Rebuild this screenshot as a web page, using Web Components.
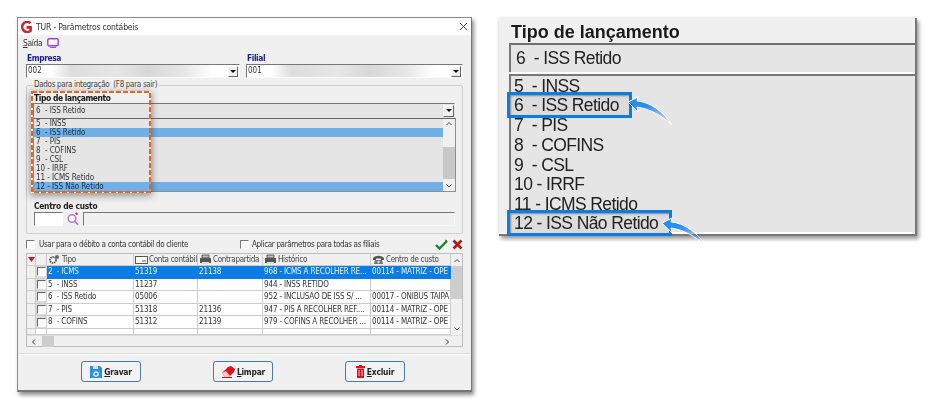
<!DOCTYPE html>
<html lang="pt">
<head>
<meta charset="utf-8">
<title>TUR - Parâmetros contábeis</title>
<style>
  html, body { margin: 0; background: #fff; }
  body {
    width: 935px; height: 411px; overflow: hidden; box-sizing: border-box;
    padding: 17px 0 0 17px;
    display: flex; align-items: flex-start; gap: 27px;
    font-family: "DejaVu Sans Condensed", "DejaVu Sans", "Liberation Sans", sans-serif;
    color: #222;
  }
  svg { display: block; }
</style>
</head>
<body>

<tur-window caption="TUR - Parâmetros contábeis">
  <menu-bar></menu-bar>
  <div style="display:grid;grid-template-columns:214px 217px;gap:6px;padding:0 8px">
    <combo-field label="Empresa" value="002" hidden-data></combo-field>
    <combo-field label="Filial" value="001" hidden-data></combo-field>
  </div>
  <group-box legend="Dados para integração  (F8 para sair)">
    <type-picker></type-picker>
    <cost-center></cost-center>
  </group-box>
  <options-row></options-row>
  <data-grid></data-grid>
  <button-bar>
    <action-button>
      <svg slot="icon" width="12" height="13" viewBox="0 0 12 13"><path d="M0 1h10l2 2v10H0z" fill="#2e8fea"/><path d="M3 1h5v3H3z" fill="#cfe6fb"/><circle cx="6" cy="9" r="2.2" fill="none" stroke="#fff" stroke-width="1.2"/></svg>
      <u>G</u>ravar
    </action-button>
    <action-button>
      <svg slot="icon" width="14" height="13" viewBox="0 0 14 13"><path d="M1 8l6-6 3-1 4 3-1 3-5 5H4z" fill="#e0101c"/><path d="M1 8l3 4h4l1-1-4-5z" fill="#f7c9c9"/><path d="M1 12.5h10" stroke="#c01018"/></svg>
      <u>L</u>impar
    </action-button>
    <action-button>
      <svg slot="icon" width="9" height="13" viewBox="0 0 9 13"><path d="M3 0h3v1h3v2H0V1h3z" fill="#e0101c"/><path d="M1 3.5h7V13H1z" fill="#e0101c"/><path d="M3 5v6M6 5v6" stroke="#fbb" stroke-width="1"/></svg>
      <u>E</u>xcluir
    </action-button>
  </button-bar>
</tur-window>

<zoom-panel heading="Tipo de lançamento" selected="6  - ISS Retido">
  <zoom-row>5  - INSS</zoom-row>
  <zoom-row marked="115">6  - ISS Retido</zoom-row>
  <zoom-row>7  - PIS</zoom-row>
  <zoom-row>8  - COFINS</zoom-row>
  <zoom-row>9  - CSL</zoom-row>
  <zoom-row>10 - IRRF</zoom-row>
  <zoom-row>11 - ICMS Retido</zoom-row>
  <zoom-row marked="155">12 - ISS Não Retido</zoom-row>
</zoom-panel>

<script>
// janela principal
class TurWindow extends HTMLElement {
  constructor() {
    super();
    this.attachShadow({ mode: "open" }).innerHTML = `
    <style>
      :host { display: block; width: 455px; height: 375px; flex: none; box-sizing: border-box;
        background: #f0f0f0; border: 1px solid #8a8a8a; border-right-color: #777; border-bottom: 2px solid #777;
        box-shadow: 2px 3px 4px rgba(0,0,0,.45); filter: blur(.25px); font-size: 8px; letter-spacing: -.32px; }
      .title { height: 17px; background: #fff; display: flex; align-items: center; padding: 0 3px 0 2px; gap: 3px; font-size: 8.6px; letter-spacing: -.2px; color: #333; }
      .title span { flex: 1; }
    </style>
    <div class="title">
      <svg width="13" height="12" viewBox="0 0 13 12"><path d="M10.5 2.2A5 5 0 1 0 10.6 9.6V6.4H6.5" fill="none" stroke="#d3202a" stroke-width="2.6"/></svg>
      <span>${this.getAttribute("caption")}</span>
      <svg width="9" height="9" viewBox="0 0 9 9"><path d="M1 1l7 7M8 1L1 8" stroke="#444" stroke-width="1"/></svg>
    </div>
    <slot></slot>`;
  }
}
customElements.define("tur-window", TurWindow);

class MenuBar extends HTMLElement {
  constructor() {
    super();
    this.attachShadow({ mode: "open" }).innerHTML = `
    <style>
      :host { display: flex; height: 18px; align-items: center; gap: 5px; padding: 0 0 3px 5px; box-sizing: border-box; color: #333; font-size: 8.4px; }
    </style>
    <span><u>S</u>aída</span>
    <svg width="12" height="10" viewBox="0 0 12 10"><rect x=".8" y=".8" width="10.4" height="7" rx="1.2" fill="#fff" stroke="#9a3fe0" stroke-width="1.4"/><path d="M3 9.4h6" stroke="#9a3fe0"/></svg>`;
  }
}
customElements.define("menu-bar", MenuBar);

class ComboField extends HTMLElement {
  constructor() {
    super();
    const mask = this.hasAttribute("hidden-data")
      ? "background:linear-gradient(90deg,#fff 12%,#ddd 22%,#e6e6e6 45%,#d8d8d8 60%,#e6e6e6 78%,#fff 92%);" : "";
    this.attachShadow({ mode: "open" }).innerHTML = `
    <style>
      :host { display: block; }
      label { display: block; height: 11px; line-height: 11px; padding-left: 1px; font-weight: bold; color: #1c1c8c; font-size: 8.4px; letter-spacing: -.4px; }
      .box { height: 14px; box-sizing: border-box; display: flex; align-items: center; border: 1px solid #fbfbfb; border-top-color: #777; border-left-color: #777; background: #fff; color: #333; }
      .val { flex: 1; height: 100%; line-height: 12px; padding-left: 1px; letter-spacing: 0; ${mask} }
      .arrow { width: 10px; height: 11px; margin-right: 1px; box-sizing: border-box; background: #f0f0f0; border: 1px solid #fff; border-right-color: #666; border-bottom-color: #666; display: flex; align-items: center; justify-content: center; }
      .arrow i { border: 3px solid transparent; border-top: 3px solid #111; border-bottom: 0; }
    </style>
    <label>${this.getAttribute("label")}</label>
    <div class="box"><div class="val">${this.getAttribute("value")}</div><div class="arrow"><i></i></div></div>`;
  }
}
customElements.define("combo-field", ComboField);

class GroupBox extends HTMLElement {
  constructor() {
    super();
    this.attachShadow({ mode: "open" }).innerHTML = `
    <style>
      :host { display: block; position: relative; box-sizing: border-box; margin: 7px 8px 0; height: 149px; border: 1px solid #cfcfcf; border-radius: 2px; padding: 7px 7px 0 6px; }
      .legend { position: absolute; left: 6px; top: -6px; padding: 0 1px; background: #f0f0f0; white-space: pre; color: #444; }
    </style>
    <div class="legend">${this.getAttribute("legend")}</div>
    <slot></slot>`;
  }
}
customElements.define("group-box", GroupBox);

// combo aberto com a lista de tipos
class TypePicker extends HTMLElement {
  constructor() {
    super();
    const rows = [["5  - INSS"], ["6  - ISS Retido", 1], ["7  - PIS"], ["8  - COFINS"], ["9  - CSL"], ["10 - IRRF"], ["11 - ICMS Retido"], ["12 - ISS Não Retido", 1]];
    this.attachShadow({ mode: "open" }).innerHTML = `
    <style>
      :host { display: block; position: relative; color: #333; letter-spacing: -.08px; }
      .cap { height: 10px; line-height: 10px; font-weight: bold; color: #111; padding-left: 1px; font-size: 8.4px; letter-spacing: -.4px; }
      .sel { height: 15px; box-sizing: border-box; display: flex; align-items: center; width: 422px; background: #e4e4e4; border: 1px solid #e4e4e4; border-top-color: #777; border-left-color: #777; padding-left: 2px; }
      .sel span { flex: 1; white-space: pre; }
      .arrow { width: 11px; height: 12px; box-sizing: border-box; background: #f0f0f0; border: 1px solid #fff; border-right-color: #666; border-bottom-color: #666; display: flex; align-items: center; justify-content: center; }
      .arrow i { border: 3px solid transparent; border-top: 3px solid #111; border-bottom: 0; }
      .list { width: 423px; height: 74px; box-sizing: border-box; border: 1px solid #8d8d8d; border-top-color: #666; background: #e5e5e5; display: flex; }
      .rows { flex: 1; }
      .row { height: 9.05px; line-height: 9px; padding-left: 2px; white-space: pre; }
      .row.on { background: #70b0e6; color: #1a2a3a; }
      .bar { width: 12px; background: #f0f0f0; display: flex; flex-direction: column; align-items: center; }
      .thumb { height: 32px; width: 12px; margin-top: auto; margin-bottom: 3px; background: #c8c8c8; }
      .frame { position: absolute; left: -2px; top: -2px; width: 120px; height: 102px; box-shadow: 0 2px 7px 1px rgba(0,0,0,.38); }
      .frame svg { position: absolute; inset: 0; }
    </style>
    <div class="cap">Tipo de lançamento</div>
    <div class="sel"><span>6  - ISS Retido</span><div class="arrow"><i></i></div></div>
    <div class="list">
      <div class="rows">${rows.map(r => `<div class="row${r[1] ? " on" : ""}">${r[0]}</div>`).join("")}</div>
      <div class="bar">
        <svg width="8" height="10" viewBox="0 0 8 10"><path d="M1.5 6L4 3.5 6.5 6" fill="none" stroke="#444"/></svg>
        <div class="thumb"></div>
        <svg style="margin-bottom:1px" width="8" height="8" viewBox="0 0 8 8"><path d="M1.5 2.5L4 5l2.5-2.5" fill="none" stroke="#444"/></svg>
      </div>
    </div>
    <div class="frame"><svg width="120" height="102"><rect x="1" y="1" width="118" height="100" fill="none" stroke="#e8651c" stroke-width="2" stroke-dasharray="5 2"/></svg></div>`;
  }
}
customElements.define("type-picker", TypePicker);

class CostCenter extends HTMLElement {
  constructor() {
    super();
    this.attachShadow({ mode: "open" }).innerHTML = `
    <style>
      :host { display: block; margin-top: 8px; }
      .cap { height: 12px; line-height: 12px; font-weight: bold; color: #222; padding-left: 1px; font-size: 8.4px; letter-spacing: -.27px; }
      .line { display: flex; height: 14px; align-items: stretch; }
      .code { width: 29px; box-sizing: border-box; margin-left: 1px; background: #fff; border: 1px solid #fff; border-top-color: #777; border-left-color: #777; }
      svg { margin: 0 4px 0 4px; }
      .desc { width: 372px; box-sizing: border-box; border: 1px solid #f7f7f7; border-top-color: #777; border-left-color: #777; }
    </style>
    <div class="cap">Centro de custo</div>
    <div class="line">
      <div class="code"></div>
      <svg width="12" height="14" viewBox="0 0 12 14"><circle cx="5" cy="6.5" r="3.8" fill="#fff" stroke="#b06ee6" stroke-width="1.4"/><path d="M8 9.5l3 3.2" stroke="#b06ee6" stroke-width="1.6"/><path d="M8.5 1l2 1.5" stroke="#e0202a" stroke-width="1.6"/></svg>
      <div class="desc"></div>
    </div>`;
  }
}
customElements.define("cost-center", CostCenter);

class OptionsRow extends HTMLElement {
  constructor() {
    super();
    this.attachShadow({ mode: "open" }).innerHTML = `
    <style>
      :host { display: flex; align-items: center; height: 12px; margin: 4px 8px 0; color: #333; letter-spacing: -.34px; }
      label { display: flex; align-items: center; gap: 4px; }
      i { display: block; width: 9px; height: 9px; box-sizing: border-box; background: #fff; border: 1px solid #fff; border-top-color: #777; border-left-color: #777; }
      .a { width: 214px; }
      .b { flex: 1; gap: 3px; }
      .ok { margin-right: 4px; }
    </style>
    <label class="a"><i></i>Usar para o débito a conta contábil do cliente</label>
    <label class="b"><i></i>Aplicar parâmetros para todas as filiais</label>
    <svg class="ok" width="13" height="11" viewBox="0 0 13 11"><path d="M1 6l3.5 3.5L12 2" fill="none" stroke="#0f8a20" stroke-width="2.4"/><path d="M10 1l2 1" stroke="#d02020"/></svg>
    <svg width="11" height="11" viewBox="0 0 11 11"><path d="M1.5 1.5l8 8M9.5 1.5l-8 8" stroke="#b01818" stroke-width="2.6"/></svg>`;
  }
}
customElements.define("options-row", OptionsRow);

// grade com os parametros ja gravados
class DataGrid extends HTMLElement {
  constructor() {
    super();
    const gears = `<svg width="13" height="11" viewBox="0 0 13 11"><circle cx="5" cy="6" r="3" fill="none" stroke="#444" stroke-width="1.6" stroke-dasharray="1.4 .8"/><circle cx="9" cy="3" r="2" fill="#666"/></svg>`;
    const card = `<svg width="13" height="10" viewBox="0 0 13 10"><rect x=".5" y="1.5" width="12" height="7" fill="#fff" stroke="#555"/><path d="M7 6h4" stroke="#c33"/></svg>`;
    const printer = `<svg width="13" height="11" viewBox="0 0 13 11"><path d="M3 1h7v3H3z" fill="#bbb" stroke="#444" stroke-width=".8"/><path d="M1 4h11v5H1z" fill="#555"/><path d="M3 8h7v2H3z" fill="#ddd"/></svg>`;
    const phone = `<svg width="13" height="10" viewBox="0 0 13 10"><path d="M1 3c3-3 8-3 11 0v2H9V3.5H4V5H1z" fill="#555"/><path d="M3 5h7l1 4H2z" fill="#777"/><circle cx="6.5" cy="7" r="1.2" fill="#ddd"/></svg>`;
    const data = [
      ["2  - ICMS", "51319", "21138", "968 - ICMS A RECOLHER RE...", "00114 - MATRIZ - OPE", 1],
      ["5  - INSS", "11237", "", "944 - INSS RETIDO", ""],
      ["6  - ISS Retido", "05006", "", "952 - INCLUSAO DE ISS S/ ...", "00017 - ONIBUS TAIPA"],
      ["7  - PIS", "51318", "21136", "947 - PIS A RECOLHER REF....", "00114 - MATRIZ - OPE"],
      ["8  - COFINS", "51312", "21139", "979 - COFINS A RECOLHER ...", "00114 - MATRIZ - OPE"]
    ];
    const heads = [[gears, "Tipo"], [card, "Conta contábil"], [printer, "Contrapartida"], [printer, "Histórico"], [phone, "Centro de custo"]];
    const body = data.map(d => `<div class="c ind"></div><div class="c chk"><i></i></div>${d.slice(0, 5).map(t => `<div class="c${d[5] ? " on" : ""}">${t}</div>`).join("")}`).join("");
    this.attachShadow({ mode: "open" }).innerHTML = `
    <style>
      :host { display: block; margin: 3px 8px 0; height: 94px; box-sizing: border-box; border: 1px solid #bdbdbd; background: #f0f0f0; color: #333; letter-spacing: -.14px; }
      .top { display: flex; height: 81px; }
      .grid { display: grid; width: 424px; grid-template-columns: 9px 11px 87px 64px 65px 108px 80px; grid-template-rows: 12px repeat(5, 12.6px) 6px; background: #fff; overflow: hidden; }
      .c { box-sizing: border-box; border-right: 1px solid #ccc; border-bottom: 1px solid #ccc; padding-left: 1px; line-height: 11.6px; overflow: hidden; white-space: pre; }
      .h { background: #f0f0f0; display: flex; align-items: center; gap: 1px; color: #444; letter-spacing: -.3px; }
      .ind { background: #f0f0f0; padding: 0; }
      .ind svg { margin: 0 0 0 1px; }
      .chk { background: #ddd; display: flex; align-items: center; justify-content: center; padding: 0; }
      .chk i { width: 9px; height: 9px; box-sizing: border-box; border: 1px solid #fff; border-top: 1px solid #666; border-left: 1px solid #666; background: #fafafa; }
      .on { background: #0a7ce4; color: #e8f3ff; border-color: #0a7ce4; }
      .v { width: 11px; background: #f0f0f0; display: flex; flex-direction: column; align-items: center; }
      .thumb { width: 11px; height: 33px; background: #cdcdcd; }
      .h-bar { height: 11px; border-top: 1px solid #ddd; display: flex; align-items: center; padding: 0 12px 0 4px; }
      .h-bar b { display: block; width: 12px; height: 11px; background: #cdcdcd; margin-left: 5px; flex: none; }
      .h-bar svg:last-child { margin-left: auto; }
    </style>
    <div class="top">
      <div class="grid">
        <div class="c h ind"><svg width="7" height="6" viewBox="0 0 7 6"><path d="M0 0h7L3.5 5z" fill="#e01020"/></svg></div><div class="c h"></div>
        ${heads.map(h => `<div class="c h">${h[0]}<span>${h[1]}</span></div>`).join("")}
        ${body}
        <div class="c ind"></div><div class="c"></div><div class="c"></div><div class="c"></div><div class="c"></div><div class="c"></div><div class="c"></div>
      </div>
      <div class="v">
        <svg width="8" height="12" viewBox="0 0 8 12"><path d="M1.5 8L4 5.5 6.5 8" fill="none" stroke="#444"/></svg>
        <div class="thumb"></div>
        <svg style="margin-top:auto;margin-bottom:2px" width="8" height="8" viewBox="0 0 8 8"><path d="M1.5 2.5L4 5l2.5-2.5" fill="none" stroke="#444"/></svg>
      </div>
    </div>
    <div class="h-bar">
      <svg width="6" height="8" viewBox="0 0 6 8"><path d="M4 1.5L1.5 4 4 6.5" fill="none" stroke="#333"/></svg>
      <b></b>
      <svg width="6" height="8" viewBox="0 0 6 8"><path d="M2 1.5L4.5 4 2 6.5" fill="none" stroke="#333"/></svg>
    </div>`;
  }
}
customElements.define("data-grid", DataGrid);

class ButtonBar extends HTMLElement {
  constructor() {
    super();
    this.attachShadow({ mode: "open" }).innerHTML = `
    <style>
      :host { display: flex; margin-top: 6px; padding: 7px 0 0 63px; height: 30px; gap: 72px; border-top: 1px solid #d8d8d8; box-shadow: inset 0 1px 0 #fff; }
    </style>
    <slot></slot>`;
  }
}
customElements.define("button-bar", ButtonBar);

class ActionButton extends HTMLElement {
  constructor() {
    super();
    this.attachShadow({ mode: "open" }).innerHTML = `
    <style>
      :host { display: flex; align-items: center; justify-content: center; gap: 2px; width: 60px; height: 21px; box-sizing: border-box; border: 1px solid #4a78a8; border-radius: 3px; background: #f3f3f3; font-weight: bold; font-size: 8.4px; letter-spacing: -.2px; color: #222; }
    </style>
    <slot name="icon"></slot><span><slot></slot></span>`;
  }
}
customElements.define("action-button", ActionButton);

// detalhe ampliado da lista
class ZoomPanel extends HTMLElement {
  constructor() {
    super();
    this.attachShadow({ mode: "open" }).innerHTML = `
    <style>
      :host { display: block; flex: none; width: 418px; height: 218px; margin-top: 1px; position: relative; background: #f0f0f0; box-sizing: border-box; border-right: 2px solid #777; border-bottom: 2px solid #777; box-shadow: 2px 3px 4px rgba(0,0,0,.4), -1px -1px 3px rgba(0,0,0,.08); font-family: "Liberation Sans", Arial, sans-serif; filter: blur(.3px); color: #222; }
      .head { height: 25px; font-weight: bold; font-size: 18px; line-height: 28px; padding-left: 12px; color: #1a1a1a; }
      .sel { height: 27px; padding-left: 5px; font-size: 17.5px; letter-spacing: -.6px; line-height: 27px; border-left: 2px solid #777; border-top: 2px solid #6e6e6e; margin-left: 10px; white-space: pre; background: #e5e5e5; }
      .white { height: 2px; background: #fff; margin-left: 10px; }
      .list { height: 158px; margin-left: 10px; border-left: 2px solid #777; border-top: 2px solid #777; box-sizing: border-box; background: #e5e5e5; }
      .foot { position: absolute; left: 0; right: 0; bottom: 0; height: 2px; background: #fff; }
      svg { position: absolute; }
    </style>
    <div class="head">${this.getAttribute("heading")}</div>
    <div class="sel">${this.getAttribute("selected")}</div>
    <div class="white"></div>
    <div class="list"><slot></slot></div>
    <div class="foot"></div>
    <svg style="left:129px;top:78px;z-index:2" width="46" height="30" viewBox="0 0 46 30"><defs><linearGradient id="a" x1="0" y1="0" x2="1" y2="1"><stop offset=".35" stop-color="#2a8cf0"/><stop offset="1" stop-color="#2a8cf0" stop-opacity="0"/></linearGradient></defs><path d="M0 6L10 1 9 5C22 6 35 15 44 29 33 19 22 13 9 11L10 16Z" fill="url(#a)" stroke="#fff" stroke-width="1"/></svg>
    <svg style="left:163px;top:199px;z-index:2" width="46" height="30" viewBox="0 0 46 30"><path d="M0 6L10 1 9 5C22 6 35 15 44 29 33 19 22 13 9 11L10 16Z" fill="url(#a)" stroke="#fff" stroke-width="1"/></svg>`;
  }
}
customElements.define("zoom-panel", ZoomPanel);

class ZoomRow extends HTMLElement {
  constructor() {
    super();
    const w = this.getAttribute("marked");
    this.attachShadow({ mode: "open" }).innerHTML = `
    <style>
      :host { display: block; height: 19.7px; line-height: 20px; font-size: 17.5px; letter-spacing: -.6px; position: relative; ${w ? "z-index: 1;" : ""} }
      .t { display: block; padding-left: 3px; white-space: pre; }
      .m { width: ${w}px; height: 20px; margin: 0 0 0 -4px; padding-left: 4px; border: 3px solid #0a7ce4; background: #dcdcdc; box-shadow: inset 1px 1px 2px #888; line-height: 20px; position: relative; top: -4px; }
    </style>
    <span class="t${w ? " m" : ""}"><slot></slot></span>`;
  }
}
customElements.define("zoom-row", ZoomRow);
</script>
</body>
</html>
